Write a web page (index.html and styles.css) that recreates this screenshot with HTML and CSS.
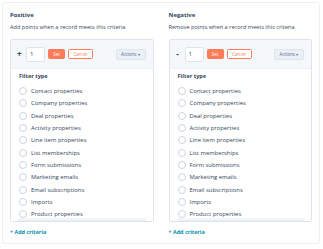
FILE: index.html
```html
<!DOCTYPE html>
<html lang="en">
<head>
    <meta charset="UTF-8">
    <meta name="viewport" content="width=device-width, initial-scale=1.0">
    <title>Score criteria</title>
    <link rel="stylesheet" href="styles.css">
</head>
<body>
    <div class="card">
        <!-- Positive -->
        <section class="column">
            <h2 class="col-title">Positive</h2>
            <p class="col-desc">Add points when a record meets this criteria</p>

            <div class="criteria-box">
                <div class="toolbar">
                    <span class="sign">+</span>
                    <input class="points-input" type="text" value="1">
                    <button class="btn btn-set">Set</button>
                    <button class="btn btn-cancel">Cancel</button>
                    <button class="btn btn-actions">Actions <span class="caret">&#9662;</span></button>
                </div>
                <div class="filter-panel">
                    <div class="filter-label">Filter type</div>
                    <ul class="filter-list">
                        <li><span class="radio"></span>Contact properties</li>
                        <li><span class="radio"></span>Company properties</li>
                        <li><span class="radio"></span>Deal properties</li>
                        <li><span class="radio"></span>Activity properties</li>
                        <li><span class="radio"></span>Line item properties</li>
                        <li><span class="radio"></span>List memberships</li>
                        <li><span class="radio"></span>Form submissions</li>
                        <li><span class="radio"></span>Marketing emails</li>
                        <li><span class="radio"></span>Email subscriptions</li>
                        <li><span class="radio"></span>Imports</li>
                        <li><span class="radio"></span>Product properties</li>
                    </ul>
                </div>
            </div>

            <a href="#" class="add-link">+ Add criteria</a>
        </section>

        <!-- Negative -->
        <section class="column">
            <h2 class="col-title">Negative</h2>
            <p class="col-desc">Remove points when a record meets this criteria</p>

            <div class="criteria-box">
                <div class="toolbar">
                    <span class="sign">-</span>
                    <input class="points-input" type="text" value="1">
                    <button class="btn btn-set">Set</button>
                    <button class="btn btn-cancel">Cancel</button>
                    <button class="btn btn-actions">Actions <span class="caret">&#9662;</span></button>
                </div>
                <div class="filter-panel">
                    <div class="filter-label">Filter type</div>
                    <ul class="filter-list">
                        <li><span class="radio"></span>Contact properties</li>
                        <li><span class="radio"></span>Company properties</li>
                        <li><span class="radio"></span>Deal properties</li>
                        <li><span class="radio"></span>Activity properties</li>
                        <li><span class="radio"></span>Line item properties</li>
                        <li><span class="radio"></span>List memberships</li>
                        <li><span class="radio"></span>Form submissions</li>
                        <li><span class="radio"></span>Marketing emails</li>
                        <li><span class="radio"></span>Email subscriptions</li>
                        <li><span class="radio"></span>Imports</li>
                        <li><span class="radio"></span>Product properties</li>
                    </ul>
                </div>
            </div>

            <a href="#" class="add-link">+ Add criteria</a>
        </section>
    </div>
</body>
</html>
```

FILE: styles.css
```css
:root {
    --text: #33475b;
    --muted: #516f90;
    --border: #dfe3eb;
    --orange: #ff7a59;
    --teal: #0091ae;
    --gray-bg: #f5f8fa;
}

* {
    margin: 0;
    padding: 0;
    box-sizing: border-box;
}

body {
    font-family: 'Open Sans', 'Liberation Sans', sans-serif;
    color: var(--text);
    background: #fff;
    padding: 2px 3px 0 2px;
}

.card {
    display: grid;
    grid-template-columns: 1fr 1fr;
    column-gap: 15px;
    border: 1px solid #eaf0f6;
    border-radius: 3px;
    padding: 7px 7px 6px 7px;
}

.column {
    display: flex;
    flex-direction: column;
    min-width: 0;
}

/* Header text */
.col-title {
    font-size: 6px;
    font-weight: 700;
    line-height: 10px;
}

.col-desc {
    font-size: 5.6px;
    line-height: 10px;
    margin-top: 2px;
    color: var(--text);
}

/* Criteria box */
.criteria-box {
    margin-top: 7px;
    border: 1px solid var(--border);
    border-radius: 2px;
    overflow: hidden;
}

.toolbar {
    height: 28px;
    background: var(--gray-bg);
    display: flex;
    align-items: center;
    padding: 0 7px 0 6px;
}

.sign {
    width: 4px;
    font-size: 8px;
    font-weight: 700;
    line-height: 1;
    margin-right: 5px;
    text-align: center;
}

.points-input {
    width: 19px;
    height: 15px;
    border: 1px solid var(--border);
    border-radius: 2px;
    background: #fff;
    font-family: inherit;
    font-size: 6px;
    color: var(--text);
    padding: 0 3px;
    outline: none;
    margin-right: 3px;
}

.btn {
    height: 10px;
    font-family: inherit;
    font-size: 4.5px;
    border-radius: 1.5px;
    cursor: pointer;
    display: inline-flex;
    align-items: center;
    justify-content: center;
}

.btn-set {
    width: 17px;
    background: var(--orange);
    border: 1px solid var(--orange);
    color: #fff;
    margin-right: 3px;
}

.btn-cancel {
    width: 25px;
    background: #fff;
    border: 1px solid var(--orange);
    color: var(--orange);
}

.btn-actions {
    margin-left: auto;
    width: 30px;
    height: 11px;
    background: #eaf0f6;
    border: 1px solid var(--border);
    color: #506e91;
    gap: 1.5px;
}

.caret {
    font-size: 3.5px;
}

/* Filter list */
.filter-panel {
    background: #fff;
    border-top: 1px solid #eef2f6;
    padding: 2px 0 0;
}

.filter-label {
    font-size: 5.6px;
    font-weight: 700;
    line-height: 10px;
    padding-left: 8px;
}

.filter-list {
    list-style: none;
    margin-top: 4px;
    height: 136px;
    overflow: hidden;
    position: relative;
}

.filter-list::after {
    content: '';
    position: absolute;
    left: 7px;
    right: 7px;
    bottom: 0;
    height: 4px;
    background: linear-gradient(to bottom, rgba(234, 240, 246, 0), #e6edf4);
}

.filter-list li {
    height: 12.3px;
    display: flex;
    align-items: center;
    gap: 4px;
    padding-left: 8px;
    font-size: 5.9px;
    color: var(--text);
    white-space: nowrap;
}

.radio {
    width: 8px;
    height: 8px;
    border: 1px solid #cbd6e2;
    border-radius: 50%;
    background: #fff;
    flex-shrink: 0;
}

/* Footer link */
.add-link {
    margin-top: 5px;
    font-size: 5.4px;
    font-weight: 700;
    line-height: 10px;
    color: var(--teal);
    text-decoration: none;
}
```
